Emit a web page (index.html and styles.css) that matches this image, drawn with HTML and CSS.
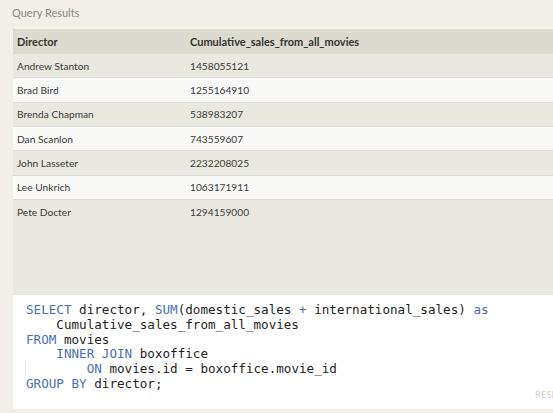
FILE: index.html
```html
<!DOCTYPE html>
<html>
<head>
<meta charset="utf-8">
<link rel="stylesheet" href="styles.css">
</head>
<body>
<div class="page">
  <div class="title">Query Results</div>
  <div class="panel">
    <div class="row head">
      <div class="c1">Director</div>
      <div class="c2">Cumulative_sales_from_all_movies</div>
    </div>
    <div class="row odd"><div class="c1">Andrew Stanton</div><div class="c2">1458055121</div></div>
    <div class="row even"><div class="c1">Brad Bird</div><div class="c2">1255164910</div></div>
    <div class="row odd"><div class="c1">Brenda Chapman</div><div class="c2">538983207</div></div>
    <div class="row even"><div class="c1">Dan Scanlon</div><div class="c2">743559607</div></div>
    <div class="row odd"><div class="c1">John Lasseter</div><div class="c2">2232208025</div></div>
    <div class="row even"><div class="c1">Lee Unkrich</div><div class="c2">1063171911</div></div>
    <div class="row odd last"><div class="c1">Pete Docter</div><div class="c2">1294159000</div></div>
  </div>
  <div class="code">
<pre class="src"><span class="kw">SELECT</span> director, <span class="kw">SUM</span>(domestic_sales <span class="kw">+</span> international_sales) <span class="kw">as</span>
    Cumulative_sales_from_all_movies
<span class="kw">FROM</span> movies
    <span class="kw">INNER JOIN</span> boxoffice
<span class="guide">    </span>    <span class="kw">ON</span> movies.id = boxoffice.movie_id
<span class="kw">GROUP BY</span> director;</pre>
    <div class="reset">RESET</div>
  </div>
</div>
</body>
</html>
```
FILE: styles.css
```css
html, body {
  margin: 0;
  padding: 0;
  background: #f1efe8;
  overflow: hidden;
}
.page {
  width: 553px;
  height: 413px;
  overflow: hidden;
  padding-left: 13px;
  box-sizing: border-box;
  font-family: Lato, "Liberation Sans", sans-serif;
}
.title {
  height: 29px;
  line-height: 26px;
  font-size: 11px;
  color: #8a8a86;
  margin-left: -1px;
}
.panel {
  width: 600px;
  height: 266px;
  background: #e9e9e1;
}
.row {
  display: flex;
  height: 23.33px;
  align-items: center;
  font-size: 10.2px;
  color: #3a3a38;
  border-bottom: 1px solid #dcdcdc;
}
.row.head {
  height: 25px;
  border-bottom: 0;
  background: #dbdbd0;
  font-size: 11px;
  font-weight: 700;
  color: #333331;
}
.row.odd { background: #e9e9e1; }
.row.even { background: #f9f9f8; }
.row.last { border-bottom: 0; }
.c1 {
  width: 173px;
  padding-left: 4px;
}
.c2 {
  flex: 1;
}
.code {
  width: 600px;
  height: 114px;
  background: #ffffff;
  position: relative;
}
.src {
  margin: 0;
  padding: 8px 0 0 13px;
  font-family: "DejaVu Sans Mono", monospace;
  font-size: 12.6px;
  line-height: 14.8px;
  color: #1e1e1e;
}
.kw { color: #4a6fb3; }
.guide {
  border-left: 1px dotted #d8d8d8;
  margin-left: -1px;
}
.reset {
  position: absolute;
  left: 522px;
  top: 94px;
  font-size: 9px;
  color: #cfcfcf;
  letter-spacing: 0.3px;
}
```
